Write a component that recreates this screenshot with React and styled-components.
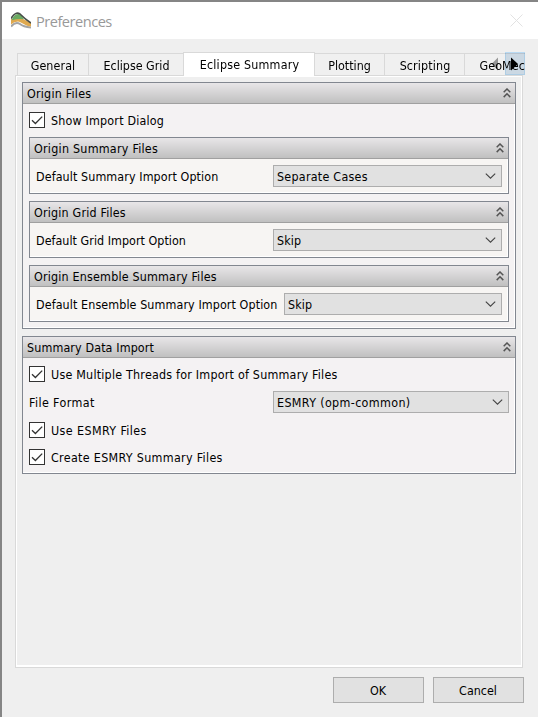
import React from "react";
import styled, { createGlobalStyle } from "styled-components";

const Global = createGlobalStyle`
  *, *::before, *::after { box-sizing: border-box; }
  html, body { margin: 0; padding: 0; overflow: hidden; }
`;

const Window = styled.div`
  display: flex;
  flex-direction: column;
  width: 538px;
  height: 717px;
  background: #efefef;
  border-left: 2px solid #858585;
  border-top: 2px solid #858585;
  font-family: "DejaVu Sans Condensed", "DejaVu Sans", sans-serif;
  font-stretch: condensed;
  font-size: 12.4px;
  line-height: 16px;
  color: #000;
  overflow: hidden;
`;

const TitleBar = styled.header`
  display: flex;
  align-items: center;
  height: 37px;
  flex: none;
  padding: 0 15px 0 9px;
  background: #fff;
`;

const Title = styled.span`
  flex: 1;
  margin-left: 5px;
  font-family: "Open Sans", "Noto Sans", sans-serif;
  font-stretch: normal;
  font-size: 14.6px;
  line-height: 20px;
  color: #999;
  letter-spacing: -0.5px;
`;

const Text = styled.span`
  white-space: pre;
  padding-top: 1px;
  letter-spacing: ${(p) => p.$ls || 0}px;
`;

const TabBar = styled.nav`
  position: relative;
  z-index: 1;
  display: flex;
  align-items: flex-end;
  height: 24px;
  flex: none;
  margin: 13px 13px -1px 15px;
`;

const Tab = styled.div`
  display: flex;
  justify-content: center;
  flex: none;
  width: ${(p) => p.$w}px;
  height: ${(p) => (p.$active ? 24 : 22)}px;
  margin-bottom: ${(p) => (p.$active ? 0 : 1)}px;
  padding-top: 3px;
  padding-left: ${(p) => p.$shift || 0}px;
  white-space: nowrap;
  border-top: 1px solid #d9d9d9;
  border-left: ${(p) => (p.$plain ? 0 : 1)}px solid #d9d9d9;
  border-right: ${(p) => (p.$active ? 1 : 0)}px solid #d9d9d9;
  background: ${(p) => (p.$active ? "#fff" : "#f0f0f0")};
`;

const LastTab = styled(Tab)`
  flex: 1;
  justify-content: flex-end;
`;

const Scroller = styled.div`
  position: absolute;
  right: 0;
  top: 0;
  display: flex;
`;

const ScrollButton = styled.div`
  display: flex;
  align-items: center;
  justify-content: center;
  width: 20px;
  height: 23px;
  border: 1px solid ${(p) => (p.$hot ? "#b9daf3" : "transparent")};
  background: ${(p) => (p.$hot ? "#d8e6f2" : "transparent")};
  mix-blend-mode: multiply;
`;

const Pane = styled.main`
  width: 508px;
  height: 593px;
  flex: none;
  margin-left: 13px;
  border: 1px solid #d9d9d9;
  box-shadow: inset 1px 1px #fff, inset -1px -2px #fff;
  padding: 6px;
`;

const Group = styled.section`
  border: 1px solid #828790;
  background: ${(p) => (p.$inner ? "#f7f5f3" : "#f4f2f3")};
  box-shadow: inset -1px -1px #fff;
  margin-top: ${(p) => p.$gap || 0}px;
`;

const GroupHeader = styled.div`
  display: flex;
  align-items: center;
  justify-content: space-between;
  height: 21px;
  padding: 0 4px 0 4px;
  border-bottom: 1px solid #a0a0a0;
  background: linear-gradient(#e8e6e8, #c0c0c0);
`;

const GroupBody = styled.div`
  padding: ${(p) => p.$pad || "6px"};
`;

const Field = styled.div`
  display: flex;
  align-items: center;
  justify-content: space-between;
  height: 22px;
  margin-top: ${(p) => p.$gap || 0}px;
`;

const Combo = styled.div`
  display: flex;
  align-items: center;
  justify-content: space-between;
  width: ${(p) => p.$w}px;
  height: 22px;
  padding: 0 5px 0 3px;
  border: 1px solid #adadad;
  background: #e1e1e1;
`;

const Check = styled.label`
  display: flex;
  align-items: center;
  gap: 6px;
  height: 16px;
  margin-top: ${(p) => p.$gap || 0}px;
`;

const Box = styled.span`
  display: flex;
  width: 16px;
  height: 16px;
  border: 1px solid #333;
  background: #fff;
`;

const Footer = styled.footer`
  display: flex;
  justify-content: flex-end;
  gap: 9px;
  padding: 9px 14px 0 0;
`;

const Button = styled.button`
  width: 91px;
  height: 26px;
  padding: 1px 1px 0 0;
  border: 1px solid #adadad;
  background: #e1e1e1;
  color: #000;
  font: inherit;
`;

const Logo = () => (
  <svg width="20" height="17" viewBox="0 0 20 17">
    <path d="M0 14.5 C3 11 6 10 9 12 C12 14.5 15 15 20 15.6" fill="none" stroke="#a4a4a4" strokeWidth="2" />
    <path d="M0 7 H12 L20 11 V14.6 C14 14 12 10.5 7 9.5 Q3 9.5 0 12.5Z" fill="#dfa94f" />
    <path d="M1 7 Q4 1.5 8 2 Q11 3 13 7.2 Q7 6.5 1 8.2Z" fill="#6aaa61" />
    <path d="M0 6.5 C3 1.5 6 0 9 2 C12 5 15 8 20 11" fill="none" stroke="#474d48" strokeWidth="1.6" />
  </svg>
);

const Close = () => (
  <svg width="13" height="13" viewBox="0 0 13 13">
    <path d="M.5 .5 12.5 12.5 M12.5 .5 .5 12.5" stroke="#e2e2e2" fill="none" />
  </svg>
);

const Collapse = () => (
  <svg width="8" height="10" viewBox="0 0 8 10">
    <path d="M.7 4.3 4 1 7.3 4.3 M.7 9.1 4 5.8 7.3 9.1" stroke="#555" strokeWidth="1.5" fill="none" />
  </svg>
);

const Chevron = () => (
  <svg width="11" height="6" viewBox="0 0 11 6">
    <path d="M.8 .6 5.5 5.2 10.2 .6" stroke="#444" strokeWidth="1.1" fill="none" />
  </svg>
);

const Tick = () => (
  <svg width="14" height="14" viewBox="0 0 14 14">
    <path d="M2 7.2 5.4 10.5 12.2 3.6" stroke="#333" strokeWidth="1.3" fill="none" />
  </svg>
);

const Arrow = ({ left }) => (
  <svg width="8" height="14" viewBox="0 0 8 14">
    <path d={left ? "M7 .5V13.5L.5 7Z" : "M0 .5V13.5L7 7Z"} fill={left ? "#a0a0a0" : "#000"} />
  </svg>
);

const Header = ({ children, ls }) => (
  <GroupHeader>
    <Text $ls={ls}>{children}</Text>
    <Collapse />
  </GroupHeader>
);

const CheckRow = ({ children, gap, ls }) => (
  <Check $gap={gap}>
    <Box><Tick /></Box>
    <Text $ls={ls}>{children}</Text>
  </Check>
);

const Select = ({ children, w, ls }) => (
  <Combo $w={w}>
    <Text $ls={ls}>{children}</Text>
    <Chevron />
  </Combo>
);

const importGroups = [
  { title: "Origin Summary Files", tls: 0.25, label: "Default Summary Import Option", ls: 0.1, value: "Separate Cases", vls: 0.26, w: 229, gap: 9 },
  { title: "Origin Grid Files", tls: 0.19, label: "Default Grid Import Option", ls: 0.04, value: "Skip", vls: 0.1, w: 229, gap: 7 },
  { title: "Origin Ensemble Summary Files", tls: 0.19, label: "Default Ensemble Summary Import Option", ls: 0.1, value: "Skip", vls: 0.1, w: 218, gap: 7 },
];

const tabs = [
  { name: "General", w: 71, ls: 0.1, shift: -0 },
  { name: "Eclipse Grid", w: 95, ls: 0, shift: 1 },
  { name: "Eclipse Summary", w: 132, ls: 0.2, shift: 1, active: true },
  { name: "Plotting", w: 69, ls: 0, plain: true },
  { name: "Scripting", w: 80, ls: 0.12, shift: 1 },
];

export default function App() {
  return (
    <>
      <Global />
      <Window>
        <TitleBar>
          <Logo />
          <Title>Preferences</Title>
          <Close />
        </TitleBar>
        <TabBar>
          {tabs.map((t) => (
            <Tab key={t.name} $w={t.w} $active={t.active} $plain={t.plain} $shift={t.shift}>
              <Text $ls={t.ls}>{t.name}</Text>
            </Tab>
          ))}
          <LastTab>
            <Text $ls={0.1}>GeoMec</Text>
          </LastTab>
          <Scroller>
            <ScrollButton><Arrow left /></ScrollButton>
            <ScrollButton $hot><Arrow /></ScrollButton>
          </Scroller>
        </TabBar>
        <Pane>
          <Group>
            <Header ls={0.22}>Origin Files</Header>
            <GroupBody $pad="8px 6px 6px">
              <CheckRow ls={0.19}>Show Import Dialog</CheckRow>
              {importGroups.map((g) => (
                <Group key={g.title} $inner $gap={g.gap}>
                  <Header ls={g.tls}>{g.title}</Header>
                  <GroupBody>
                    <Field>
                      <Text $ls={g.ls}>{g.label}</Text>
                      <Select w={g.w} ls={g.vls}>{g.value}</Select>
                    </Field>
                  </GroupBody>
                </Group>
              ))}
            </GroupBody>
          </Group>
          <Group $gap={7}>
            <Header ls={0.13}>Summary Data Import</Header>
            <GroupBody $pad="8px 6px 8px">
              <CheckRow ls={0.22}>Use Multiple Threads for Import of Summary Files</CheckRow>
              <Field $gap={9}>
                <Text $ls={0.4}>File Format</Text>
                <Select w={236} ls={0.36}>ESMRY (opm-common)</Select>
              </Field>
              <CheckRow gap={9} ls={0.4}>Use ESMRY Files</CheckRow>
              <CheckRow gap={11} ls={0.32}>Create ESMRY Summary Files</CheckRow>
            </GroupBody>
          </Group>
        </Pane>
        <Footer>
          <Button>OK</Button>
          <Button>Cancel</Button>
        </Footer>
      </Window>
    </>
  );
}
